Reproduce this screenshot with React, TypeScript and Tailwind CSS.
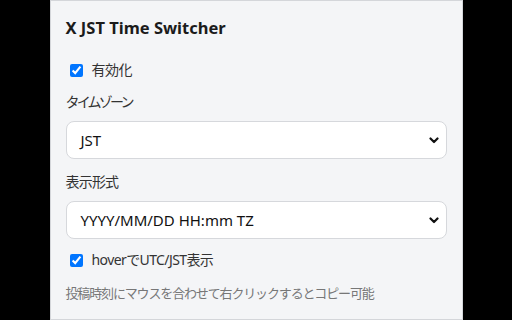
import { useState } from "react";

const font = "font-['Noto_Sans','Noto_Sans_CJK_JP',sans-serif]";

function Chevron() {
  return (
    <svg width="10" height="7" viewBox="0 0 10 7" className="shrink-0">
      <path d="M1.5 1.5 5 5l3.5-3.5" fill="none" stroke="#111" strokeWidth="2.2" strokeLinecap="round" strokeLinejoin="round" />
    </svg>
  );
}

function FakeSelect({ value }: { value: string }) {
  return (
    <div className="h-[38px] flex items-center justify-between rounded-lg border border-[#d6d8dc] bg-white pl-[14px] pr-[7px] text-[15px] text-[#111]">
      <span>{value}</span>
      <Chevron />
    </div>
  );
}

export default function App() {
  const [enabled, setEnabled] = useState(true);
  const [hover, setHover] = useState(true);

  return (
    <div className={`w-[512px] h-[320px] bg-black flex justify-center ${font}`}>
      <div className="w-[413px] h-full bg-[#f4f5f7] border border-[#d4d6da] px-[15px] pt-[15px] flex flex-col">
        <h1 className="text-[16.5px] leading-6 font-bold text-[#1b1b1b]">X JST Time Switcher</h1>

        <label className="mt-5 h-5 flex items-center gap-[9px] text-sm text-[#333]">
          <input
            type="checkbox"
            checked={enabled}
            onChange={(e) => setEnabled(e.target.checked)}
            className="m-0 ml-1 size-[13px]"
          />
          <span className="tracking-[-0.5px]">有効化</span>
        </label>

        <p className="mt-3 h-5 leading-5 text-sm text-[#333] tracking-[-2.8px]">タイムゾーン</p>
        <div className="mt-[9px]">
          <FakeSelect value="JST" />
        </div>

        <p className="mt-[13px] h-5 leading-5 text-sm text-[#333] tracking-[-0.8px]">表示形式</p>
        <div className="mt-[9px]">
          <FakeSelect value="YYYY/MM/DD HH:mm TZ" />
        </div>

        <label className="mt-[11px] h-5 flex items-center gap-[9px] text-sm text-[#333]">
          <input
            type="checkbox"
            checked={hover}
            onChange={(e) => setHover(e.target.checked)}
            className="m-0 ml-1 size-[13px]"
          />
          <span className="tracking-[-0.6px]">hoverでUTC/JST表示</span>
        </label>

        <p className="mt-[14px] leading-[18px] text-[13px] text-[#777] tracking-[-1.15px]">
          投稿時刻にマウスを合わせて右クリックするとコピー可能
        </p>
      </div>
    </div>
  );
}
